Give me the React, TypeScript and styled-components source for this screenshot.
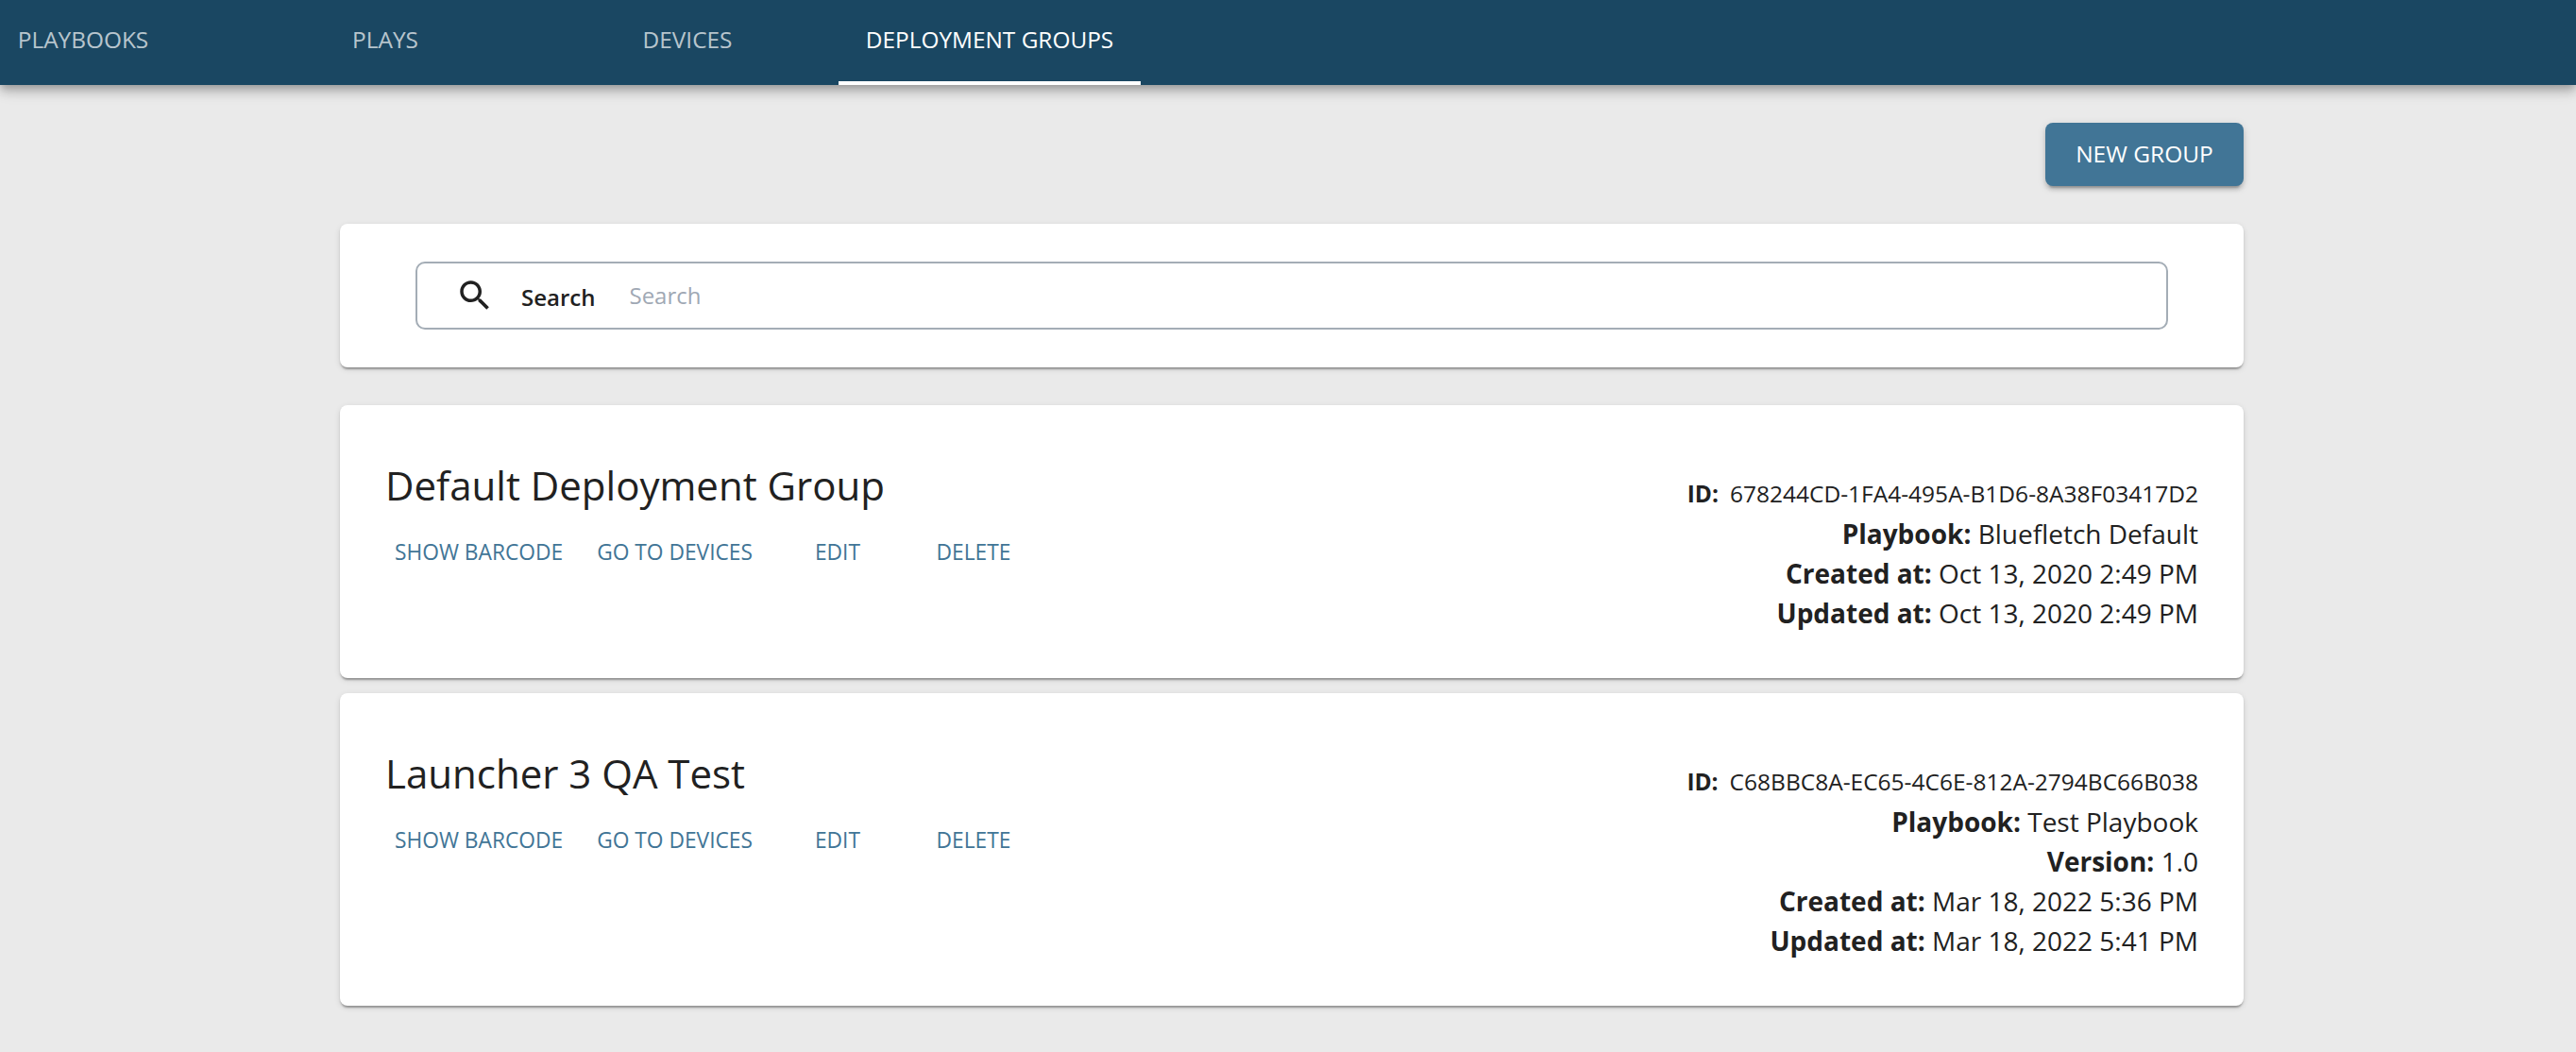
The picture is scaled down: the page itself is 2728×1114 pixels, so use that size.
import React from "react";
import styled, { createGlobalStyle } from "styled-components";

const Global = createGlobalStyle`
  html, body { margin: 0; padding: 0; background: #eaeaea; }
  body { font-family: "Open Sans", "Noto Sans", sans-serif; color: #212121; overflow: hidden; }
  * { box-sizing: border-box; }
`;

const Page = styled.div`
  height: 1114px;
  overflow: hidden;
  background: #eaeaea;
`;

const NavBar = styled.nav`
  height: 90px;
  background: #1a4762;
  overflow: hidden;
  box-shadow: 0 4px 8px -2px rgba(0, 0, 0, 0.2), 0 8px 10px 0 rgba(0, 0, 0, 0.14), 0 2px 20px 0 rgba(0, 0, 0, 0.12);
  position: relative;
  z-index: 2;
  display: flex;
`;

const TabList = styled.div`
  display: flex;
  margin-left: -72px;
`;

const Tab = styled.a<{ $active?: boolean }>`
  width: 320px;
  height: 90px;
  display: flex;
  justify-content: center;
  padding-top: 25px;
  font-size: 24.4px;
  line-height: 33px;
  text-transform: uppercase;
  color: ${(p) => (p.$active ? "#ffffff" : "rgba(255,255,255,0.7)")};
  border-bottom: 4px solid ${(p) => (p.$active ? "#ffffff" : "transparent")};
`;

const Main = styled.main`
  width: 2016px;
  margin-left: 360px;
  padding-top: 40px;
`;

const Actions = styled.div`
  display: flex;
  justify-content: flex-end;
  margin-bottom: 40px;
`;

const PrimaryButton = styled.button`
  width: 210px;
  height: 67px;
  padding: 0 0 2px;
  border: 0;
  border-radius: 8px;
  background: #417596;
  color: #fff;
  font: 400 24.5px/33px "Open Sans", sans-serif;
  text-transform: uppercase;
  box-shadow: 0 6px 2px -4px rgba(0, 0, 0, 0.2), 0 4px 4px 0 rgba(0, 0, 0, 0.14), 0 2px 10px 0 rgba(0, 0, 0, 0.12);
`;

const Card = styled.section`
  background: #fff;
  border-radius: 8px;
  box-shadow: 0 4px 2px -2px rgba(0, 0, 0, 0.2), 0 2px 2px 0 rgba(0, 0, 0, 0.14), 0 2px 6px 0 rgba(0, 0, 0, 0.12);
`;

const SearchCard = styled(Card)`
  height: 152px;
  padding: 40px 80px;
  margin-bottom: 40px;
`;

const SearchBox = styled.label`
  height: 72px;
  border: 2px solid #a4adb6;
  border-radius: 10px;
  display: flex;
  align-items: center;
  padding-left: 40px;
`;

const SearchIcon = styled.svg`
  width: 42px;
  height: 42px;
  fill: #212121;
  flex: none;
`;

const SearchLabel = styled.span`
  margin-left: 28px;
  margin-top: 2px;
  font-size: 24px;
  font-weight: 600;
  color: #212121;
`;

const SearchInput = styled.input`
  flex: 1;
  margin-left: 36px;
  margin-bottom: 2px;
  padding: 0;
  border: 0;
  outline: 0;
  background: transparent;
  font: 400 24px/33px "Open Sans", sans-serif;
  color: #212121;
  &::placeholder { color: #a0a8b4; opacity: 1; }
`;

const GroupList = styled.div`
  display: flex;
  flex-direction: column;
  gap: 16px;
`;

const GroupCard = styled(Card)`
  display: flex;
  justify-content: space-between;
  padding: 48px 48px 48px;
`;

const GroupMain = styled.div`
  display: flex;
  flex-direction: column;
`;

const GroupTitle = styled.h2`
  margin: 9px 0 0;
  font-size: 42px;
  line-height: 56px;
  font-weight: 400;
  color: #212121;
`;

const LinkRow = styled.div`
  display: flex;
  gap: 16px;
  margin-top: 20px;
`;

const TextButton = styled.a`
  min-width: 128px;
  height: 44px;
  padding: 0 10px;
  display: flex;
  align-items: center;
  justify-content: center;
  font-size: 22.75px;
  text-transform: uppercase;
  color: #417596;
`;

const Meta = styled.div`
  padding-top: 24px;
  text-align: right;
`;

const IdLine = styled.div`
  font-size: 24.5px;
  line-height: 43px;
`;

const IdLabel = styled.b`
  font-weight: 700;
  margin-right: 12px;
`;

const MetaLine = styled.div`
  font-size: 28px;
  line-height: 42px;
`;

const MetaLabel = styled.b`
  font-weight: 700;
`;

type Group = { title: string; id: string; meta: [string, string][] };

const groups: Group[] = [
  {
    title: "Default Deployment Group",
    id: "678244CD-1FA4-495A-B1D6-8A38F03417D2",
    meta: [
      ["Playbook:", "Bluefletch Default"],
      ["Created at:", "Oct 13, 2020 2:49 PM"],
      ["Updated at:", "Oct 13, 2020 2:49 PM"],
    ],
  },
  {
    title: "Launcher 3 QA Test",
    id: "C68BBC8A-EC65-4C6E-812A-2794BC66B038",
    meta: [
      ["Playbook:", "Test Playbook"],
      ["Version:", "1.0"],
      ["Created at:", "Mar 18, 2022 5:36 PM"],
      ["Updated at:", "Mar 18, 2022 5:41 PM"],
    ],
  },
];

export default function App() {
  return (
    <Page>
      <Global />
      <NavBar>
        <TabList>
          <Tab>Playbooks</Tab>
          <Tab>Plays</Tab>
          <Tab>Devices</Tab>
          <Tab $active>Deployment Groups</Tab>
        </TabList>
      </NavBar>
      <Main>
        <Actions>
          <PrimaryButton>New Group</PrimaryButton>
        </Actions>
        <SearchCard>
          <SearchBox>
            <SearchIcon viewBox="0 0 24 24">
              <path d="M15.5 14h-.79l-.28-.27C15.41 12.59 16 11.11 16 9.5 16 5.91 13.09 3 9.5 3S3 5.91 3 9.5 5.91 16 9.5 16c1.61 0 3.09-.59 4.23-1.57l.27.28v.79l5 4.99L20.49 19l-4.99-5zm-6 0C7.01 14 5 11.99 5 9.5S7.01 5 9.5 5 14 7.01 14 9.5 11.99 14 9.5 14z" />
            </SearchIcon>
            <SearchLabel>Search</SearchLabel>
            <SearchInput placeholder="Search" />
          </SearchBox>
        </SearchCard>
        <GroupList>
          {groups.map((g) => (
            <GroupCard key={g.id}>
              <GroupMain>
                <GroupTitle>{g.title}</GroupTitle>
                <LinkRow>
                  <TextButton>Show Barcode</TextButton>
                  <TextButton>Go to Devices</TextButton>
                  <TextButton>Edit</TextButton>
                  <TextButton>Delete</TextButton>
                </LinkRow>
              </GroupMain>
              <Meta>
                <IdLine>
                  <IdLabel>ID:</IdLabel>
                  {g.id}
                </IdLine>
                {g.meta.map(([k, v]) => (
                  <MetaLine key={k}>
                    <MetaLabel>{k}</MetaLabel> {v}
                  </MetaLine>
                ))}
              </Meta>
            </GroupCard>
          ))}
        </GroupList>
      </Main>
    </Page>
  );
}
